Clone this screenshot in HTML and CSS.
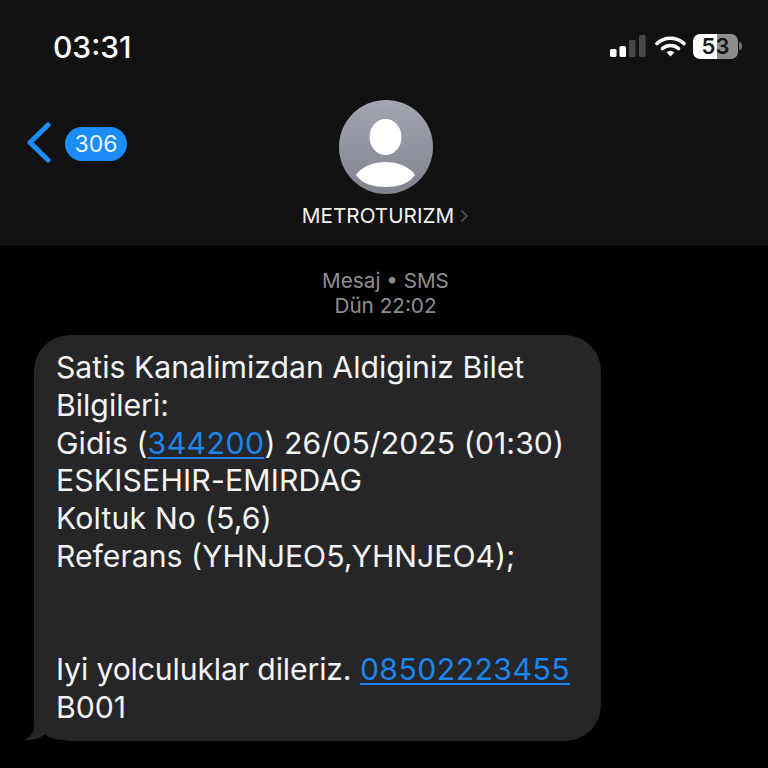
FILE: index.html
```html
<!DOCTYPE html>
<html lang="tr">
<head>
<meta charset="utf-8">
<title>METROTURIZM</title>
<link rel="stylesheet" href="styles.css">
</head>
<body>
<header class="header">
  <div class="status">
    <span class="time">03:31</span>
    <div class="status-icons">
      <svg class="signal" width="36" height="24" viewBox="0 0 36 24">
        <rect x="0" y="15" width="6.500" height="8" rx="1.500" fill="#fff"/>
        <rect x="9.500" y="12" width="6.500" height="11" rx="1.500" fill="#fff"/>
        <rect x="19" y="6" width="6.500" height="17" rx="1.500" fill="#48484a"/>
        <rect x="29" y="1" width="6.500" height="22" rx="1.500" fill="#48484a"/>
      </svg>
      <svg class="wifi" width="31" height="22" viewBox="0 0 31 22">
        <path d="M2 8.500C9.500 1.500 21.500 1.500 29 8.500" fill="none" stroke="#fff" stroke-width="3.600" stroke-linecap="round"/>
        <path d="M7.500 13.500C12 9.500 19 9.500 23.500 13.500" fill="none" stroke="#fff" stroke-width="3.600" stroke-linecap="round"/>
        <path d="M11.500 17.300C14 15.300 17 15.300 19.500 17.300L15.500 21.500Z" fill="#fff"/>
      </svg>
      <div class="battery"><span class="battery-num">53</span></div>
      <span class="battery-cap"></span>
    </div>
  </div>
  <nav class="nav">
    <div class="back">
      <svg width="26" height="42" viewBox="0 0 26 42"><path d="M22 3L4 20.500L22 38" fill="none" stroke="#1c8cf9" stroke-width="5" stroke-linecap="round" stroke-linejoin="round"/></svg>
      <span class="badge">306</span>
    </div>
    <div class="contact">
      <svg class="avatar" width="94" height="94" viewBox="0 0 94 94">
        <defs><linearGradient id="av" x1="0" y1="0" x2="0" y2="1"><stop offset="0" stop-color="#a2a6b0"/><stop offset="1" stop-color="#7f838d"/></linearGradient></defs>
        <circle cx="47" cy="47" r="47" fill="url(#av)"/>
        <ellipse cx="46.500" cy="37" rx="16" ry="18" fill="#fff"/>
        <path d="M17 75C23 66 35 62 46.500 62C58 62 70 66 76 75C70 84 58 87 46.500 87C35 87 23 84 17 75Z" fill="#fff"/>
      </svg>
      <div class="name-row">
        <span class="name">METROTURIZM</span>
        <svg width="9" height="14" viewBox="0 0 9 14"><path d="M1.500 1.500L7 7L1.500 12.500" fill="none" stroke="#4c4c4e" stroke-width="1.800"/></svg>
      </div>
    </div>
  </nav>
</header>
<main class="thread">
  <div class="meta">
    <div>Mesaj • SMS</div>
    <div>Dün 22:02</div>
  </div>
  <div class="bubble">
    <svg class="tail" width="44" height="37" viewBox="0 0 44 37"><path d="M10 0V22C10 28 6 33.500 0 36C8 36.600 15 34.500 21 30.500C26 34 32 36 44 36V0Z" fill="#262629"/></svg>
    <div class="message">
      <div>Satis Kanalimizdan Aldiginiz Bilet</div>
      <div>Bilgileri:</div>
      <div class="wide-slight">Gidis (<a class="link">344200</a>) 26/05/2025 (01:30)</div>
      <div class="wide">ESKISEHIR-EMIRDAG</div>
      <div class="wide">Koltuk No (5,6)</div>
      <div>Referans (YHNJEO5,YHNJEO4);</div>
      <div>&nbsp;</div>
      <div>&nbsp;</div>
      <div><span class="tight">Iyi yolculuklar dileriz.</span> <a class="link">08502223455</a></div>
      <div>B001</div>
    </div>
  </div>
</main>
</body>
</html>
```
FILE: styles.css
```css
* { box-sizing: border-box; }
html, body { margin: 0; padding: 0; }
body {
  width: 768px;
  height: 768px;
  overflow: hidden;
  background: #000;
  color: #fff;
  font-family: "Inter", "Liberation Sans", sans-serif;
}
.header {
  height: 245px;
  background: #121212;
  border-bottom: 1px solid #1a1a1a;
  display: flex;
  flex-direction: column;
}
.status {
  height: 100px;
  padding: 29px 26px 0 53px;
  display: flex;
  justify-content: space-between;
  align-items: flex-start;
}
.time {
  font-size: 30px;
  font-weight: 500;
  line-height: 36px;
}
.status-icons {
  display: flex;
  align-items: center;
  height: 36px;
  position: relative;
  top: -1px;
}
.wifi { margin-left: 9px; margin-right: 7px; }
.signal, .wifi { flex: none; }
.battery {
  width: 45px;
  height: 25px;
  border-radius: 7px;
  background: linear-gradient(90deg, #fff 0 53%, #8c8c8c 53% 100%);
  display: flex;
  align-items: center;
  justify-content: center;
}
.battery-num {
  color: #161616;
  font-size: 22px;
  font-weight: 600;
  line-height: 25px;
}
.battery-cap {
  width: 3px;
  height: 8px;
  margin-left: 1px;
  border-radius: 0 3px 3px 0;
  background: #6d6d6d;
}
.nav {
  display: grid;
  grid-template-columns: 1fr auto 1fr;
}
.back {
  padding: 22px 0 0 26px;
  display: flex;
  align-items: flex-start;
  gap: 13px;
}
.badge {
  margin-top: 5px;
  width: 62px;
  height: 34px;
  border-radius: 17px;
  background: #1c8cf9;
  text-align: center;
  font-size: 23px;
  line-height: 34px;
  color: #e8f3ff;
}
.contact {
  padding-left: 3px;
  display: flex;
  flex-direction: column;
  align-items: center;
}
.name-row {
  margin-top: 9px;
  display: flex;
  align-items: center;
  gap: 6px;
}
.name {
  font-size: 20.700px;
  line-height: 26px;
  color: #f2f2f2;
}
.thread {
  padding: 23px 0 0 34px;
}
.meta {
  width: 703px;
  text-align: center;
  font-size: 20.700px;
  line-height: 25px;
  color: #8e8e90;
}
.bubble {
  position: relative;
  margin-top: 17px;
  width: 567px;
  height: 406px;
  padding: 14px 0 0 22px;
  background: #262629;
  border-radius: 36px;
  font-size: 30.200px;
  line-height: 37.800px;
  color: #f4f4f4;
}
.message {
  position: relative;
}
.wide { letter-spacing: 0.170px; }
.wide-slight { letter-spacing: 0.070px; }
.tight { letter-spacing: -0.150px; }
.link {
  color: #1c86ee;
  letter-spacing: 0.450px;
  text-decoration: underline;
  text-decoration-thickness: 2px;
  text-underline-offset: 3px;
}
.tail {
  position: absolute;
  left: -10px;
  bottom: 0;
}
```
